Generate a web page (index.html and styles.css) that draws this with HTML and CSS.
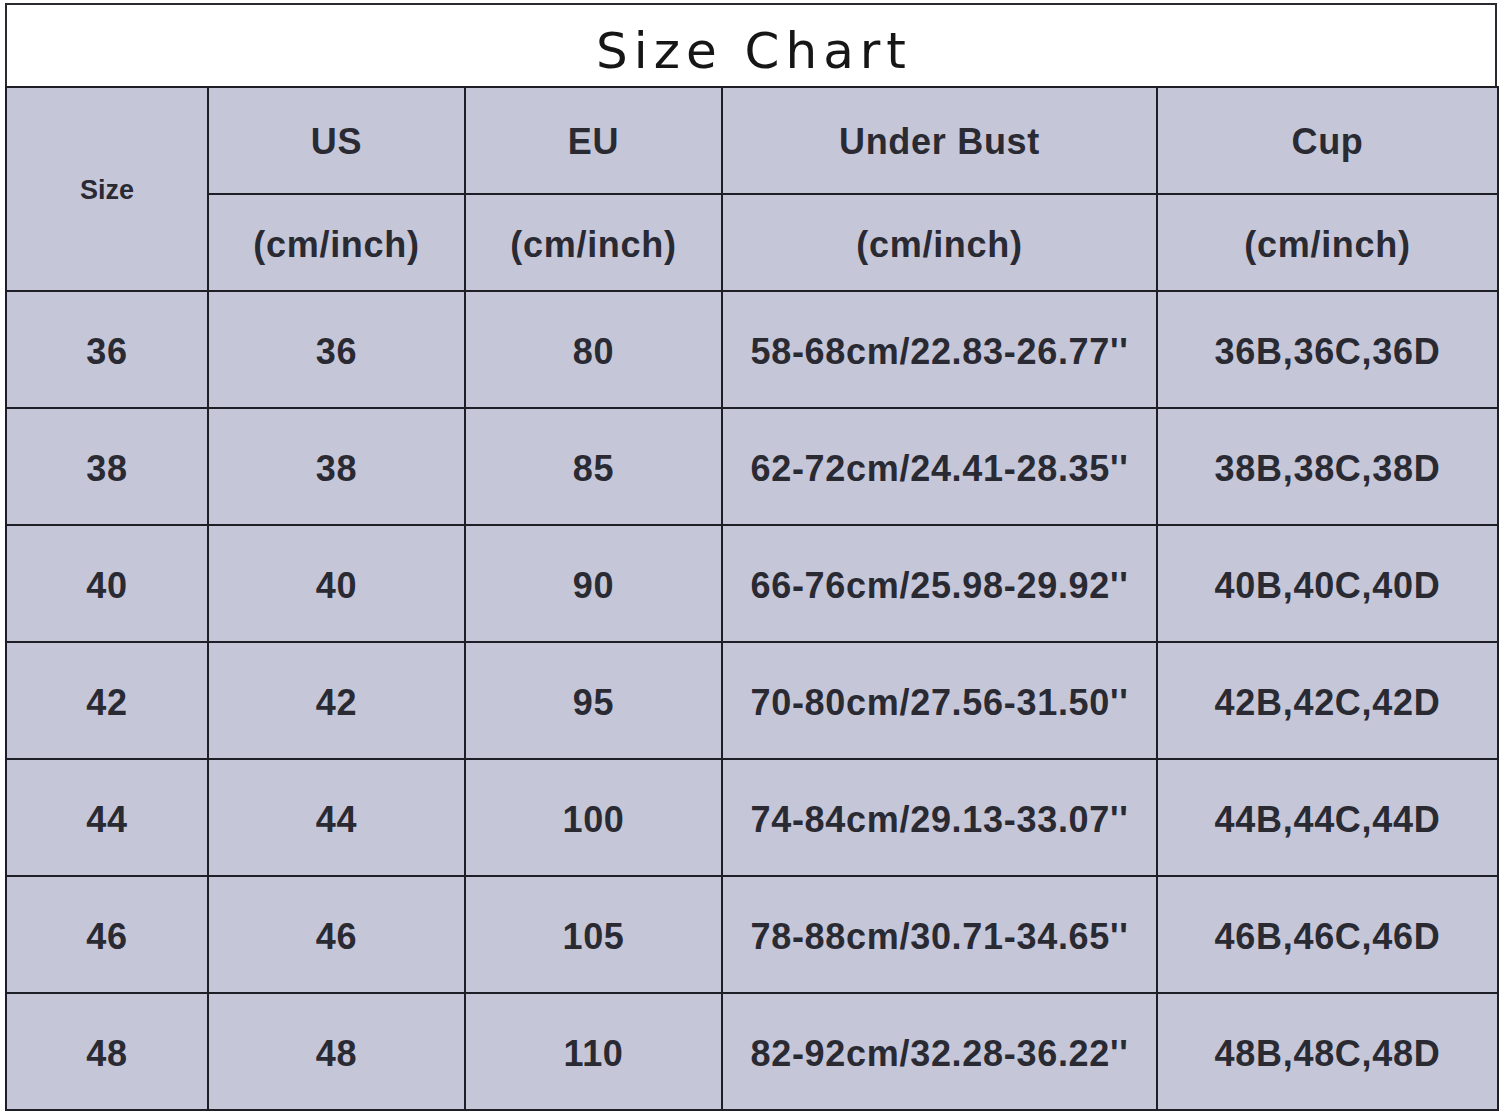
FILE: index.html
```html
<!DOCTYPE html>
<html>
<head>
<meta charset="utf-8">
<link rel="stylesheet" href="styles.css">
</head>
<body>
<div class="chart">
  <div class="title"><span class="title-text">Size Chart</span></div>
  <table class="grid">
    <colgroup>
      <col class="c1"><col class="c2"><col class="c3"><col class="c4"><col class="c5">
    </colgroup>
    <tr class="h1">
      <td rowspan="2" class="size-head">Size</td>
      <td>US</td><td>EU</td><td>Under Bust</td><td>Cup</td>
    </tr>
    <tr class="h2">
      <td>(cm/inch)</td><td>(cm/inch)</td><td>(cm/inch)</td><td>(cm/inch)</td>
    </tr>
    <tr><td>36</td><td>36</td><td>80</td><td>58-68cm/22.83-26.77''</td><td>36B,36C,36D</td></tr>
    <tr><td>38</td><td>38</td><td>85</td><td>62-72cm/24.41-28.35''</td><td>38B,38C,38D</td></tr>
    <tr><td>40</td><td>40</td><td>90</td><td>66-76cm/25.98-29.92''</td><td>40B,40C,40D</td></tr>
    <tr><td>42</td><td>42</td><td>95</td><td>70-80cm/27.56-31.50''</td><td>42B,42C,42D</td></tr>
    <tr><td>44</td><td>44</td><td>100</td><td>74-84cm/29.13-33.07''</td><td>44B,44C,44D</td></tr>
    <tr><td>46</td><td>46</td><td>105</td><td>78-88cm/30.71-34.65''</td><td>46B,46C,46D</td></tr>
    <tr><td>48</td><td>48</td><td>110</td><td>82-92cm/32.28-36.22''</td><td>48B,48C,48D</td></tr>
  </table>
</div>
</body>
</html>
```
FILE: styles.css
```css
html, body {
  margin: 0;
  padding: 0;
  background: #ffffff;
}
.chart {
  margin: 3px 3px 0 5px;
  width: 1492px;
  border: 2px solid #2a2a30;
  box-sizing: border-box;
  border-bottom: none;
}
.title {
  height: 81px;
  display: flex;
  align-items: center;
  justify-content: center;
  padding-top: 10px;
  box-sizing: border-box;
  font-family: "DejaVu Sans", sans-serif;
  font-size: 50px;
  font-weight: normal;
  color: #161616;
}
.title-text {
  letter-spacing: 6px;
  margin-right: -6px;
}
.grid {
  border-collapse: collapse;
  table-layout: fixed;
  width: 1492px;
  margin-left: -2px;
}
.c1 { width: 202px; }
.c2 { width: 257px; }
.c3 { width: 257px; }
.c4 { width: 435px; }
.c5 { width: 341px; }
.grid td {
  border: 2px solid #1e1e26;
  background: #c6c6d9;
  text-align: center;
  vertical-align: middle;
  font-family: "Liberation Sans", Arial, sans-serif;
  font-weight: bold;
  font-size: 36px;
  letter-spacing: 0.7px;
  color: #2a2a33;
  height: 117px;
  padding: 4px 0 0 0;
  box-sizing: border-box;
}
.grid tr.h1 td { height: 107px; padding-top: 2px; }
.grid tr.h2 td { height: 97px; padding-top: 4px; }
.grid td.size-head {
  font-size: 27px;
  letter-spacing: 0;
  padding-top: 0;
}
```
